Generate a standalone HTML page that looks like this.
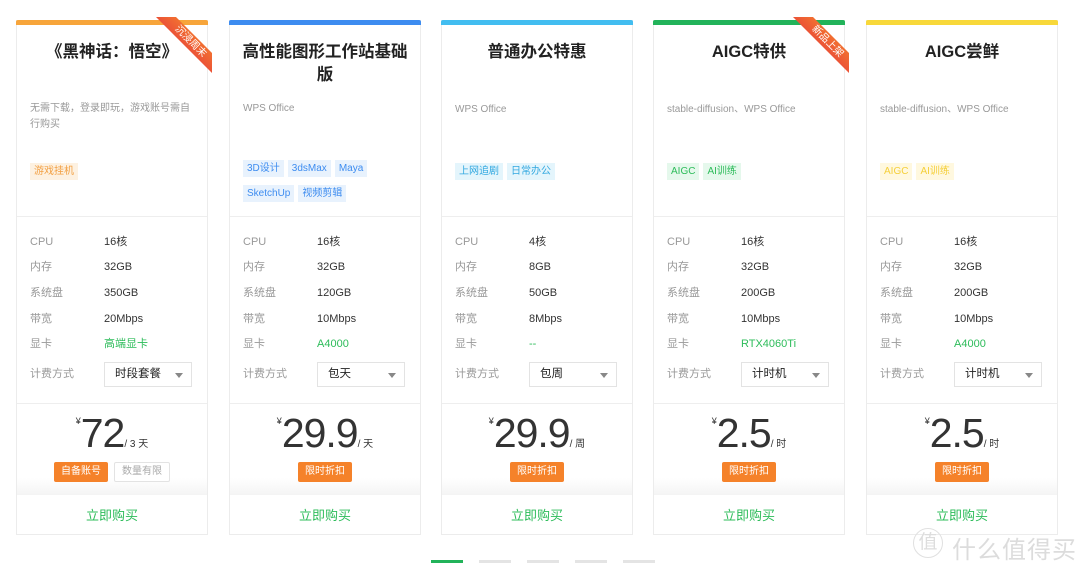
<!DOCTYPE html>
<html><head><meta charset="utf-8"><style>
*{margin:0;padding:0;box-sizing:border-box}
body{width:1080px;height:570px;background:#fff;position:relative;overflow:hidden;font-family:"Liberation Sans","Noto Sans CJK SC",sans-serif;color:#333}
.card{position:absolute;top:20px;width:192px;height:515px;border:1px solid #ececec;border-top:none;background:#fff}
.bar{position:absolute;left:-1px;right:-1px;top:0;height:5px;border-radius:2px 2px 0 0}
.title{position:absolute;top:21px;left:10px;right:10px;text-align:center;font-size:16.5px;font-weight:bold;line-height:23px;color:#222}
.desc{position:absolute;left:13px;right:8px;font-size:10px;line-height:16px;color:#999}
.tags{position:absolute;left:13px;right:8px}
.tag{display:inline-block;font-size:10px;height:17px;line-height:17px;padding:0 4px;margin:0 4px 6px 0}
.hr{position:absolute;left:0;right:0;height:1px;background:#eee}
.row{position:absolute;left:13px;font-size:11px;color:#999;height:16px;line-height:16px}
.row b{position:absolute;left:74px;font-weight:normal;color:#333;white-space:nowrap}
.sel{position:absolute;left:87px;top:342px;width:88px;height:25px;border:1px solid #e3e3e3;font-size:11.5px;line-height:23px;padding-left:10px;color:#222}
.sel:after{content:"";position:absolute;right:8px;top:10px;border:4px solid transparent;border-top:5px solid #888}
.price{position:absolute;top:388px;left:0;right:0;text-align:center;white-space:nowrap;color:#333}
.price .y{font-size:9px;vertical-align:top;position:relative;top:8px}
.price .n{font-size:41px;letter-spacing:-1px;line-height:50px}
.price .u{font-size:10px}
.btns{position:absolute;top:442px;left:0;right:0;text-align:center;font-size:0}
.btn{display:inline-block;font-size:10px;height:20px;line-height:20px;padding:0 7px;background:#f5822a;color:#fff;border-radius:2px;margin:0 3px}
.btn.g{background:#fff;color:#aaa;border:1px solid #e3e3e3;line-height:18px}
.fade{position:absolute;left:0;right:0;top:458px;height:17px;background:linear-gradient(#fff,#f4f4f4)}
.buy{position:absolute;top:485px;left:0;right:0;text-align:center;font-size:13px;color:#2dbc5a}
.rib{position:absolute;left:139px;top:-3px;width:56px;height:56px;clip-path:polygon(0 0,20px 0,56px 36px,56px 56px);background:linear-gradient(45deg,#e8443a 40%,#f47a2e 75%)}
.rib span{position:absolute;left:14px;top:19px;width:40px;text-align:center;transform:rotate(45deg);color:#fff;font-size:10px;line-height:12px;white-space:nowrap}
.dot{position:absolute;top:560px;height:3px;width:32px;background:#e4e4e4}
</style></head><body>

<div class="card" style="left:16px">
<div class="bar" style="background:#f7a53b"></div>
<div class="rib"><span>沉浸周末</span></div>
<div class="title">《黑神话：悟空》</div>
<div class="desc" style="top:81px">无需下载，登录即玩，游戏账号需自行购买</div>
<div class="tags" style="top:141px"><span class="tag" style="background:#fdf1e1;color:#f2a043">游戏挂机</span></div>
<div class="hr" style="top:196px"></div>
<div class="row" style="top:214px">CPU<b>16核</b></div>
<div class="row" style="top:239px">内存<b>32GB</b></div>
<div class="row" style="top:265px">系统盘<b>350GB</b></div>
<div class="row" style="top:291px">带宽<b>20Mbps</b></div>
<div class="row" style="top:316px">显卡<b style="color:#2dbc5a">高端显卡</b></div>
<div class="row" style="top:346px">计费方式</div>
<div class="sel">时段套餐</div>
<div class="hr" style="top:383px"></div>
<div class="price"><span class="y">¥</span><span class="n">72</span><span class="u">/ 3 天</span></div>
<div class="fade"></div>
<div class="btns"><span class="btn">自备账号</span><span class="btn g">数量有限</span></div>
<div class="buy">立即购买</div>
</div>

<div class="card" style="left:229px">
<div class="bar" style="background:#3d8cf0"></div>
<div class="title">高性能图形工作站基础版</div>
<div class="desc" style="top:81px">WPS Office</div>
<div class="tags" style="top:138px">
<span class="tag" style="background:#e8f2fd;color:#3d8cf0">3D设计</span><span class="tag" style="background:#e8f2fd;color:#3d8cf0">3dsMax</span><span class="tag" style="background:#e8f2fd;color:#3d8cf0">Maya</span><br><span class="tag" style="background:#e8f2fd;color:#3d8cf0">SketchUp</span><span class="tag" style="background:#e8f2fd;color:#3d8cf0">视频剪辑</span></div>
<div class="hr" style="top:196px"></div>
<div class="row" style="top:214px">CPU<b>16核</b></div>
<div class="row" style="top:239px">内存<b>32GB</b></div>
<div class="row" style="top:265px">系统盘<b>120GB</b></div>
<div class="row" style="top:291px">带宽<b>10Mbps</b></div>
<div class="row" style="top:316px">显卡<b style="color:#2dbc5a">A4000</b></div>
<div class="row" style="top:346px">计费方式</div>
<div class="sel">包天</div>
<div class="hr" style="top:383px"></div>
<div class="price"><span class="y">¥</span><span class="n">29.9</span><span class="u">/ 天</span></div>
<div class="fade"></div>
<div class="btns"><span class="btn">限时折扣</span></div>
<div class="buy">立即购买</div>
</div>

<div class="card" style="left:441px">
<div class="bar" style="background:#42bdf0"></div>
<div class="title">普通办公特惠</div>
<div class="desc" style="top:82px">WPS Office</div>
<div class="tags" style="top:141px"><span class="tag" style="background:#e4f5fc;color:#32a8e0">上网追剧</span><span class="tag" style="background:#e4f5fc;color:#32a8e0">日常办公</span></div>
<div class="hr" style="top:196px"></div>
<div class="row" style="top:214px">CPU<b>4核</b></div>
<div class="row" style="top:239px">内存<b>8GB</b></div>
<div class="row" style="top:265px">系统盘<b>50GB</b></div>
<div class="row" style="top:291px">带宽<b>8Mbps</b></div>
<div class="row" style="top:316px">显卡<b style="color:#2dbc5a">--</b></div>
<div class="row" style="top:346px">计费方式</div>
<div class="sel">包周</div>
<div class="hr" style="top:383px"></div>
<div class="price"><span class="y">¥</span><span class="n">29.9</span><span class="u">/ 周</span></div>
<div class="fade"></div>
<div class="btns"><span class="btn">限时折扣</span></div>
<div class="buy">立即购买</div>
</div>

<div class="card" style="left:653px">
<div class="bar" style="background:#22b35a"></div>
<div class="rib"><span>新品上架</span></div>
<div class="title">AIGC特供</div>
<div class="desc" style="top:82px">stable-diffusion、WPS Office</div>
<div class="tags" style="top:141px"><span class="tag" style="background:#e5f8ec;color:#2dbc5a">AIGC</span><span class="tag" style="background:#e5f8ec;color:#2dbc5a">AI训练</span></div>
<div class="hr" style="top:196px"></div>
<div class="row" style="top:214px">CPU<b>16核</b></div>
<div class="row" style="top:239px">内存<b>32GB</b></div>
<div class="row" style="top:265px">系统盘<b>200GB</b></div>
<div class="row" style="top:291px">带宽<b>10Mbps</b></div>
<div class="row" style="top:316px">显卡<b style="color:#2dbc5a">RTX4060Ti</b></div>
<div class="row" style="top:346px">计费方式</div>
<div class="sel">计时机</div>
<div class="hr" style="top:383px"></div>
<div class="price"><span class="y">¥</span><span class="n">2.5</span><span class="u">/ 时</span></div>
<div class="fade"></div>
<div class="btns"><span class="btn">限时折扣</span></div>
<div class="buy">立即购买</div>
</div>

<div class="card" style="left:866px">
<div class="bar" style="background:#f8d83a"></div>
<div class="title">AIGC尝鲜</div>
<div class="desc" style="top:82px">stable-diffusion、WPS Office</div>
<div class="tags" style="top:141px"><span class="tag" style="background:#fff8df;color:#f5cf3a">AIGC</span><span class="tag" style="background:#fff8df;color:#f5cf3a">AI训练</span></div>
<div class="hr" style="top:196px"></div>
<div class="row" style="top:214px">CPU<b>16核</b></div>
<div class="row" style="top:239px">内存<b>32GB</b></div>
<div class="row" style="top:265px">系统盘<b>200GB</b></div>
<div class="row" style="top:291px">带宽<b>10Mbps</b></div>
<div class="row" style="top:316px">显卡<b style="color:#2dbc5a">A4000</b></div>
<div class="row" style="top:346px">计费方式</div>
<div class="sel">计时机</div>
<div class="hr" style="top:383px"></div>
<div class="price"><span class="y">¥</span><span class="n">2.5</span><span class="u">/ 时</span></div>
<div class="fade"></div>
<div class="btns"><span class="btn">限时折扣</span></div>
<div class="buy">立即购买</div>
</div>

<div class="dot" style="left:431px;background:#22b35a"></div>
<div class="dot" style="left:479px"></div>
<div class="dot" style="left:527px"></div>
<div class="dot" style="left:575px"></div>
<div class="dot" style="left:623px"></div>

<div style="position:absolute;left:913px;top:528px;width:30px;height:30px;border:1.5px solid #e0e0e0;border-radius:50%;color:#ddd;font-size:19px;line-height:27px;text-align:center">值</div>
<div style="position:absolute;left:952px;top:530px;font-size:24px;color:#dcdcdc;letter-spacing:1px">什么值得买</div>
</body></html>
